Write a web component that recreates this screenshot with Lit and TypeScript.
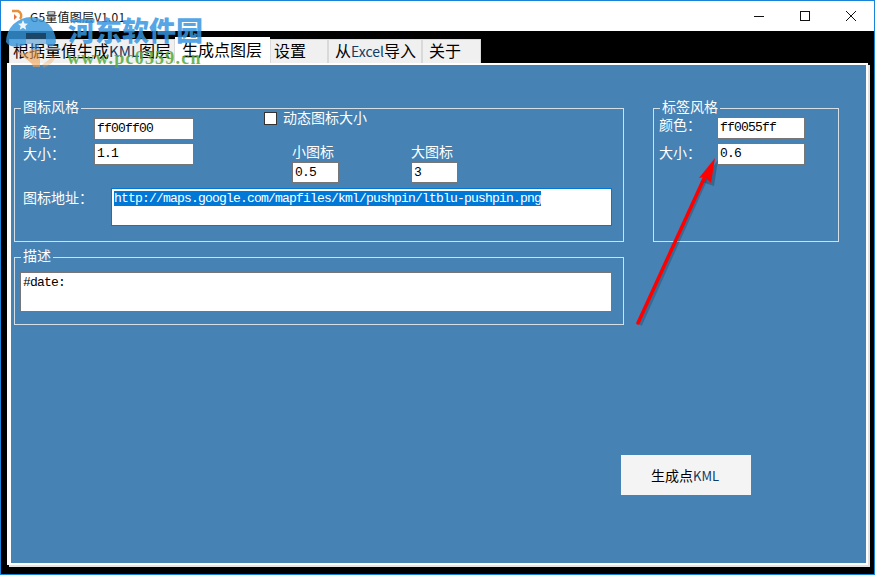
import { LitElement, html, css } from "lit";
import { customElement } from "lit/decorators.js";

@customElement("app-root")
export class AppRoot extends LitElement {
  static styles = css`
    :host {
      display: block;
      width: 875px;
      height: 575px;
      overflow: hidden;
      font-family: "Noto Sans CJK SC", "Noto Sans", sans-serif;
    }
    .window {
      position: relative;
      box-sizing: border-box;
      width: 875px;
      height: 575px;
      border: 1px solid #1883d7;
      background: #000;
      display: flex;
      flex-direction: column;
      overflow: hidden;
    }
    .titlebar {
      height: 30px;
      flex: none;
      background: #fff;
      display: flex;
      align-items: center;
      font-size: 12px;
      color: #111;
    }
    .app-icon { margin: 0 0 0 10px; width: 14px; height: 14px; flex: none; }
    .title { margin-left: 5px; letter-spacing: 0.2px; }
    .controls { margin-left: auto; display: flex; }
    .ctl { width: 46px; height: 30px; display: flex; align-items: center; justify-content: center; }
    .ctl svg { width: 12px; height: 12px; }
    .body { flex: 1; display: flex; flex-direction: column; padding: 6px 4px 7px 6px; min-height: 0; }
    .tabs { display: flex; height: 26px; flex: none; align-items: flex-start; padding-left: 2px; font-size: 16px; color: #000; position: relative; z-index: 1; }
    .tab {
      box-sizing: border-box;
      height: 24px;
      margin-top: 2px;
      background: #f0f0f0;
      border: 1px solid #d9d9d9;
      border-bottom: none;
      line-height: 21px;
      white-space: nowrap;
      padding-left: 6px;
    }
    .tab.first { width: 166px; padding-left: 3px; }
    .tab.sel { width: 95px; height: 27px; margin-top: 0; background: #fff; border-color: #fff; padding-left: 6px; line-height: 23px; }
    .tab.t3 { width: 58px; padding-left: 3px; }
    .tab.t4 { width: 94px; }
    .tab.t5 { width: 59px; }
    .tab .lat { font-size: 15px; color: #123a63; }
    .tab.t4 .lat { font-size: 14px; }
    .page {
      flex: 1;
      min-height: 0;
      box-sizing: border-box;
      background: #4682b4;
      border: solid #fff;
      border-width: 2px 2px 2px 4px;
      box-shadow: 2px 2px 0 #e3e3e3;
      margin-right: 2px;
      margin-bottom: 2px;
      padding: 43px 0 0 3px;
      display: flex;
      flex-direction: column;
      color: #fff;
      font-size: 14px;
    }
    .groups { display: flex; gap: 29px; align-items: flex-start; }
    .col { display: flex; flex-direction: column; gap: 15px; width: 610px; }
    .group { box-sizing: border-box; border: 1px solid #d7dfe6; position: relative; }
    .legend {
      position: absolute;
      top: -12px;
      left: 6px;
      padding: 0 2px;
      background: #4682b4;
      line-height: 18px;
      height: 15px;
      font-size: 14px;
    }
    .g1 { height: 134px; display: flex; flex-direction: column; padding: 0 0 0 8px; }
    .g1-top { display: flex; }
    .fields { width: 171px; margin-top: 9px; display: flex; flex-direction: column; gap: 2px; }
    .field { display: flex; justify-content: space-between; }
    .lbl { line-height: 20px; white-space: nowrap; }
    .lbl.low { margin-top: 3px; }
    .input {
      box-sizing: border-box;
      background: #fff;
      border: 1px solid #767676;
      color: #000;
      font-family: "Liberation Mono", monospace;
      font-size: 13px;
      letter-spacing: -0.8px;
      padding-left: 2px;
      line-height: 20px;
      white-space: nowrap;
      overflow: hidden;
    }
    .w100 { width: 100px; height: 22px; }
    .right-top { margin-left: 70px; display: flex; flex-direction: column; }
    .check { display: flex; align-items: center; gap: 6px; height: 18px; white-space: nowrap; }
    .check-text { line-height: 16px; margin-top: -2px; }
    .box { box-sizing: border-box; width: 13px; height: 13px; background: #fff; border: 1px solid #333; flex: none; }
    .minis { display: flex; gap: 72px; margin: 17px 0 0 28px; }
    .mini { display: flex; flex-direction: column; width: 47px; }
    .mini .lbl { line-height: 14px; height: 18px; }
    .w47 { width: 47px; height: 21px; }
    .url-row { display: flex; margin-top: 5px; }
    .url-row .lbl { width: 88px; flex: none; line-height: 19px; }
    .url {
      box-sizing: border-box;
      width: 501px;
      height: 38px;
      background: #fff;
      border: 1px solid #0078d7;
      color: #000;
      font-family: "Liberation Mono", monospace;
      font-size: 13px;
      letter-spacing: -0.8px;
      padding: 2px 0 0 2px;
      line-height: 15px;
    }
    .sel-text { background: #0078d7; color: #fff; }
    .g2 { height: 68px; padding: 14px 0 0 5px; }
    .desc { width: 592px; height: 40px; padding: 2px 0 0 2px; line-height: 16px; }
    .g3 { width: 186px; height: 134px; padding: 8px 0 0 5px; display: flex; flex-direction: column; gap: 4px; }
    .g3 .field { width: 146px; }
    .g3 .lbl { line-height: 18px; }
    .g3 .lbl.high { margin-top: -2px; }
    .w88 { width: 88px; height: 22px; }
    .btn-row { margin: 130px 0 0 607px; }
    .btn {
      box-sizing: border-box;
      width: 130px;
      height: 40px;
      padding-right: 2px;
      background: #f4f4f4;
      color: #000;
      display: flex;
      align-items: center;
      justify-content: center;
      font-size: 14px;
    }
    .btn .lat { font-size: 13px; color: #123a63; }
    .overlay { position: absolute; left: 0; top: 0; pointer-events: none; z-index: 2; }
    .wm-cn {
      position: absolute;
      z-index: 3;
      left: 67px;
      top: 11px;
      font-weight: 900;
      font-size: 27px;
      color: rgba(55, 150, 225, 0.85);
      white-space: nowrap;
      line-height: 36px;
    }
    .wm-en {
      position: absolute;
      z-index: 3;
      left: 66px;
      top: 48px;
      font-family: "Liberation Serif", serif;
      font-weight: 700;
      font-size: 18px;
      letter-spacing: 1.2px;
      color: rgba(80, 170, 60, 0.85);
      white-space: nowrap;
      line-height: 18px;
    }
  `;

  render() {
    return html`
      <div class="window">
        <div class="titlebar">
          <svg class="app-icon" viewBox="0 0 14 14"><path d="M1 2h6a5 5 0 0 1 2 8" fill="none" stroke="#e8903a" stroke-width="2.5"/><path d="M3 5l3 3-3 3z" fill="#e8703a"/></svg>
          <span class="title">G5量值图层V1.01</span>
          <div class="controls">
            <div class="ctl"><svg viewBox="0 0 12 12"><path d="M1 6.5h10" stroke="#111" fill="none"/></svg></div>
            <div class="ctl"><svg viewBox="0 0 12 12"><rect x="1.5" y="1.5" width="9" height="9" stroke="#111" fill="none"/></svg></div>
            <div class="ctl"><svg viewBox="0 0 12 12"><path d="M1 1l10 10M11 1L1 11" stroke="#111" fill="none"/></svg></div>
          </div>
        </div>
        <div class="body">
          <div class="tabs">
            <div class="tab first">根据量值生成<span class="lat">KML</span>图层</div>
            <div class="tab sel">生成点图层</div>
            <div class="tab t3">设置</div>
            <div class="tab t4">从<span class="lat">Excel</span>导入</div>
            <div class="tab t5">关于</div>
          </div>
          <div class="page">
            <div class="groups">
              <div class="col">
                <div class="group g1">
                  <div class="legend">图标风格</div>
                  <div class="g1-top">
                    <div class="fields">
                      <div class="field"><span class="lbl low">颜色：</span><div class="input w100">ff00ff00</div></div>
                      <div class="field"><span class="lbl">大小：</span><div class="input w100">1.1</div></div>
                    </div>
                    <div class="right-top">
                      <div class="check"><span class="box"></span><span class="check-text">动态图标大小</span></div>
                      <div class="minis">
                        <div class="mini"><span class="lbl">小图标</span><div class="input w47">0.5</div></div>
                        <div class="mini"><span class="lbl">大图标</span><div class="input w47">3</div></div>
                      </div>
                    </div>
                  </div>
                  <div class="url-row">
                    <span class="lbl">图标地址：</span>
                    <div class="url"><span class="sel-text">http://maps.google.com/mapfiles/kml/pushpin/ltblu-pushpin.png</span></div>
                  </div>
                </div>
                <div class="group g2">
                  <div class="legend">描述</div>
                  <div class="input desc">#date:</div>
                </div>
              </div>
              <div class="group g3">
                <div class="legend">标签风格</div>
                <div class="field"><span class="lbl high">颜色：</span><div class="input w88">ff0055ff</div></div>
                <div class="field"><span class="lbl">大小：</span><div class="input w88">0.6</div></div>
              </div>
            </div>
            <div class="btn-row"><div class="btn">生成点<span class="lat">KML</span></div></div>
          </div>
        </div>
        <svg class="overlay" width="873" height="573" viewBox="1 1 873 573">
          <path d="M640 325L707 176" stroke="#1d3f5c" stroke-opacity=".35" stroke-width="4" fill="none"/>
          <path d="M702 182L718 160L714 186Z" fill="#1d3f5c" fill-opacity=".4"/>
          <path d="M638 323L707 172" stroke="#f00" stroke-width="3.5" fill="none" stroke-linecap="round"/>
          <path d="M699 178L715 158L711 183L705 177Z" fill="#f00"/>
          <path d="M6 42A25 25 0 0 1 56 42C54 47 50 48 46 44V33H26V44C20 48 10 48 6 42Z" fill="rgba(55,150,220,.82)"/>
          <path d="M26 33H46V44H39V50H31V44H26Z" fill="rgba(55,140,205,.5)"/>
          <path d="M13 47C19 55 27 55 31 49H40V67H33C33 61 21 58 13 47Z" fill="rgba(240,160,80,.6)"/>
          <path d="M43 66C48 64 52 60 54 56" fill="none" stroke="rgba(240,160,80,.35)" stroke-width="4"/>
          <path d="M23 20l1.5 3.5 3.5.3-2.7 2.3.9 3.6-3.2-2-3.2 2 .9-3.6-2.7-2.3 3.5-.3z" fill="rgba(255,255,255,.9)"/>
        </svg>
        <div class="wm-cn">河东软件园</div>
        <div class="wm-en">www.pc0359.cn</div>
      </div>
    `;
  }
}
